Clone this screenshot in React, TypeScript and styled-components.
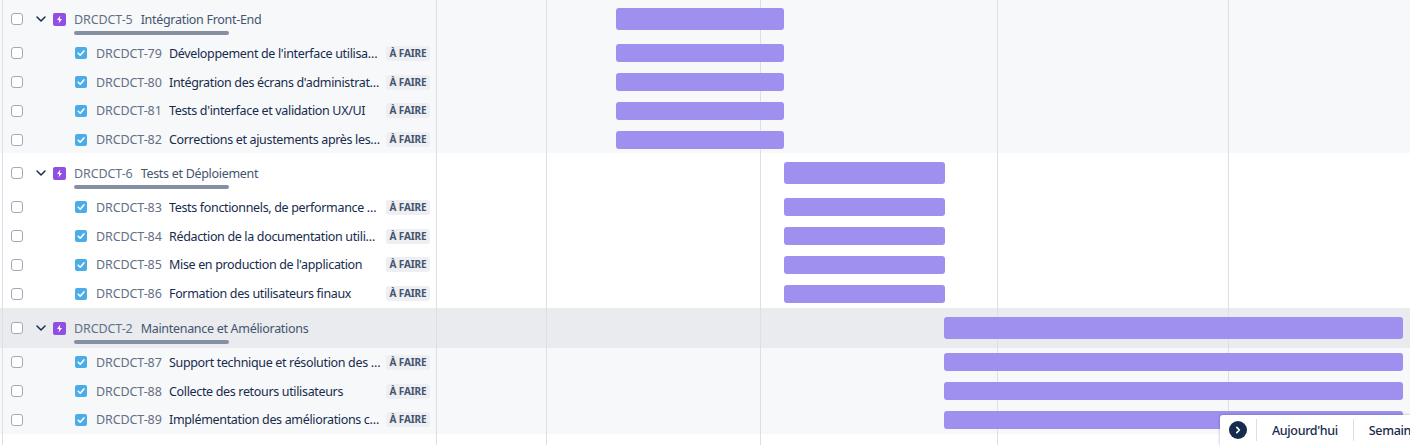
import React from "react";
import styled, { createGlobalStyle } from "styled-components";

const Global = createGlobalStyle`
  html, body { margin: 0; padding: 0; background: #fff; overflow: hidden; }
  body { font-family: "Noto Sans", "Open Sans", sans-serif; color: #172b4d; }
`;

const Page = styled.div`
  position: relative;
  width: 1410px;
  height: 445px;
  overflow: hidden;
`;

const Rows = styled.div`
  margin-top: -1px;
  display: flex;
  flex-direction: column;
`;

const Group = styled.section<{ $shaded: boolean }>`
  background: ${(p) => (p.$shaded ? "#f7f8f9" : "#ffffff")};
  display: flex;
  flex-direction: column;
  &:first-child {
    margin-bottom: -1px;
  }
  &:nth-child(2) {
    position: relative;
  }
`;

const ParentRow = styled.div<{ $hover: boolean }>`
  display: grid;
  grid-template-columns: 437px 1fr;
  height: 40px;
  background: ${(p) => (p.$hover ? "#e9ebee" : "transparent")};
`;

const ChildRow = styled.div`
  display: grid;
  grid-template-columns: 437px 1fr;
  height: 28.75px;
`;

const Cell = styled.div`
  position: relative;
  display: flex;
  align-items: center;
  padding-left: 11px;
  font-size: 12.5px;
  white-space: nowrap;
  min-width: 0;
`;

const Check = styled.span`
  flex: none;
  box-sizing: border-box;
  width: 12px;
  height: 12px;
  border: 1.5px solid #a2a9b7;
  border-radius: 3px;
  background: #fff;
`;

const Chevron = styled.svg`
  flex: none;
  width: 12px;
  height: 12px;
  margin-left: 12px;
`;

const EpicSvg = styled.svg`
  flex: none;
  width: 13px;
  height: 13px;
  margin-left: 6px;
`;

const TaskSvg = styled.svg`
  flex: none;
  width: 12px;
  height: 12px;
  margin-left: 52px;
`;

const ParentKey = styled.span`
  margin-left: 8px;
  color: #626f86;
  letter-spacing: -0.1px;
`;

const ChildKey = styled.span`
  margin-left: 9px;
  width: 73px;
  flex: none;
  color: #626f86;
  letter-spacing: -0.1px;
`;

const ParentTitle = styled.span`
  margin-left: 8px;
  color: #44546f;
  letter-spacing: -0.3px;
`;

const ChildTitle = styled.span`
  width: 212px;
  flex: none;
  overflow: hidden;
  text-overflow: ellipsis;
  color: #172b4d;
  letter-spacing: -0.34px;
`;

const Badge = styled.span`
  flex: none;
  box-sizing: border-box;
  width: 44px;
  height: 15px;
  margin-left: 5px;
  background: #eeeff2;
  border-radius: 3px;
  color: #44546f;
  font-size: 10px;
  font-weight: 700;
  line-height: 15px;
  text-align: center;
  letter-spacing: -0.1px;
`;

const Progress = styled.span`
  position: absolute;
  left: 74px;
  bottom: 4px;
  width: 155px;
  height: 4px;
  border-radius: 2px;
  background: #8590a2;
`;

const Track = styled.div`
  position: relative;
  z-index: 2;
  display: flex;
  align-items: center;
`;

const Bar = styled.div<{ $tall: boolean }>`
  height: ${(p) => (p.$tall ? 22 : 18)}px;
  border-radius: 3px;
  background: #9f8fef;
`;

const GridLine = styled.div`
  position: absolute;
  top: 0;
  bottom: 0;
  width: 1px;
  background: #dcdfe4;
  z-index: 1;
`;

const Dock = styled.div`
  position: absolute;
  z-index: 3;
  left: 1220px;
  top: 415px;
  width: 190px;
  height: 30px;
  background: #fff;
  border-top-left-radius: 3px;
  box-shadow: 0 0 3px rgba(9, 30, 66, 0.35);
  display: flex;
  align-items: center;
  font-size: 12.5px;
  font-weight: 500;
  color: #172b4d;
  letter-spacing: -0.35px;
  white-space: nowrap;
  overflow: hidden;
`;

const RoundBtn = styled.span`
  flex: none;
  width: 18px;
  height: 18px;
  margin-left: 9px;
  border-radius: 50%;
  background: #172b4d;
  display: flex;
  align-items: center;
  justify-content: center;
`;

const Divider = styled.span<{ $first?: boolean }>`
  flex: none;
  width: 1px;
  height: 22px;
  margin-left: ${(p) => (p.$first ? 9 : 0)}px;
  background: #dcdfe4;
`;

const DockItem = styled.span`
  flex: none;
  padding: 0 15px;
`;

const Epic = () => (
  <EpicSvg viewBox="0 0 13 13">
    <rect width="13" height="13" rx="2" fill="#904ee2" />
    <path d="M7.3 2.6 4 7h2.2l-.6 3.4L9 6H6.8z" fill="#fff" />
  </EpicSvg>
);

const Task = () => (
  <TaskSvg viewBox="0 0 12 12">
    <rect width="12" height="12" rx="2" fill="#4bade8" />
    <path d="M3.2 6.2 5.2 8.2 8.9 3.9" fill="none" stroke="#fff" strokeWidth="1.6" strokeLinecap="round" strokeLinejoin="round" />
  </TaskSvg>
);

type Child = { key: string; title: string };
type G = { key: string; title: string; left: number; width: number; shaded: boolean; hover: boolean; children: Child[] };

const groups: G[] = [
  {
    key: "DRCDCT-5", title: "Intégration Front-End", left: 179, width: 168, shaded: true, hover: false,
    children: [
      { key: "DRCDCT-79", title: "Développement de l'interface utilisateur et des composants" },
      { key: "DRCDCT-80", title: "Intégration des écrans d'administration et de gestion" },
      { key: "DRCDCT-81", title: "Tests d'interface et validation UX/UI" },
      { key: "DRCDCT-82", title: "Corrections et ajustements après les retours utilisateurs" },
    ],
  },
  {
    key: "DRCDCT-6", title: "Tests et Déploiement", left: 347, width: 161, shaded: false, hover: false,
    children: [
      { key: "DRCDCT-83", title: "Tests fonctionnels, de performance et de sécurité" },
      { key: "DRCDCT-84", title: "Rédaction de la documentation utilisateur et technique" },
      { key: "DRCDCT-85", title: "Mise en production de l'application" },
      { key: "DRCDCT-86", title: "Formation des utilisateurs finaux" },
    ],
  },
  {
    key: "DRCDCT-2", title: "Maintenance et Améliorations", left: 507, width: 459, shaded: true, hover: true,
    children: [
      { key: "DRCDCT-87", title: "Support technique et résolution des incidents signalés" },
      { key: "DRCDCT-88", title: "Collecte des retours utilisateurs" },
      { key: "DRCDCT-89", title: "Implémentation des améliorations continues du produit" },
    ],
  },
];

const lines = [2, 436, 546, 760, 997, 1228];

export default function App() {
  return (
    <Page>
      <Global />
      {lines.map((x) => (
        <GridLine key={x} style={{ left: x }} />
      ))}
      <Rows>
        {groups.map((g) => (
          <Group key={g.key} $shaded={g.shaded}>
            <ParentRow $hover={g.hover}>
              <Cell>
                <Check />
                <Chevron viewBox="0 0 12 12">
                  <path d="M2 4l4 4 4-4" fill="none" stroke="#172b4d" strokeWidth="1.5" strokeLinecap="round" strokeLinejoin="round" />
                </Chevron>
                <Epic />
                <ParentKey>{g.key}</ParentKey>
                <ParentTitle>{g.title}</ParentTitle>
                <Progress />
              </Cell>
              <Track>
                <Bar $tall style={{ marginLeft: g.left, width: g.width }} />
              </Track>
            </ParentRow>
            {g.children.map((c) => (
              <ChildRow key={c.key}>
                <Cell>
                  <Check />
                  <Task />
                  <ChildKey>{c.key}</ChildKey>
                  <ChildTitle>{c.title}</ChildTitle>
                  <Badge>À FAIRE</Badge>
                </Cell>
                <Track>
                  <Bar $tall={false} style={{ marginLeft: g.left, width: g.width }} />
                </Track>
              </ChildRow>
            ))}
          </Group>
        ))}
      </Rows>
      <Dock>
        <RoundBtn>
          <svg width="10" height="10" viewBox="0 0 10 10">
            <path d="M3.8 2.4 6.4 5 3.8 7.6" fill="none" stroke="#fff" strokeWidth="1.6" strokeLinecap="round" strokeLinejoin="round" />
          </svg>
        </RoundBtn>
        <Divider $first />
        <DockItem>Aujourd'hui</DockItem>
        <Divider />
        <DockItem>Semaines</DockItem>
      </Dock>
    </Page>
  );
}
